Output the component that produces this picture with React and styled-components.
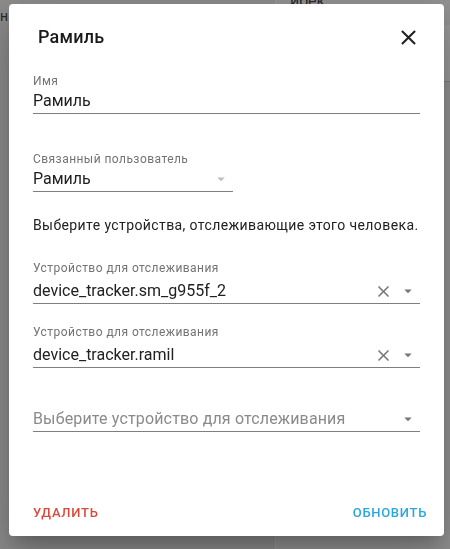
import styled, { createGlobalStyle } from "styled-components";

const GlobalStyle = createGlobalStyle`
  html, body {
    margin: 0;
    padding: 0;
    height: 100%;
    overflow: hidden;
    font-family: Roboto, "Noto Sans", sans-serif;
  }
`;

const CloseIcon = ({ size = 24, color = "currentColor" }) => (
  <svg width={size} height={size} viewBox="0 0 24 24">
    <path
      fill={color}
      d="M19,6.41L17.59,5L12,10.59L6.41,5L5,6.41L10.59,12L5,17.59L6.41,19L12,13.41L17.59,19L19,17.59L13.41,12L19,6.41Z"
    />
  </svg>
);

const ArrowIcon = ({ color }) => (
  <svg width="18" height="18" viewBox="0 0 24 24">
    <path fill={color} d="M7,10L12,15L17,10H7Z" />
  </svg>
);

function Field({ label, value, placeholder, width, clearable, arrow, gap }) {
  return (
    <FieldBox $width={width}>
      <Label $gap={gap}>{label || "\u00a0"}</Label>
      <InputRow>
        {value ? <Value>{value}</Value> : <Placeholder>{placeholder}</Placeholder>}
        {clearable && (
          <ClearBtn>
            <CloseIcon size={19} color="#777" />
          </ClearBtn>
        )}
        {arrow && (
          <ArrowBox>
            <ArrowIcon color={arrow} />
          </ArrowBox>
        )}
      </InputRow>
    </FieldBox>
  );
}

export default function App() {
  return (
    <>
      <GlobalStyle />
      <Page>
        <LeftCol>
          <PageText>он</PageText>
        </LeftCol>
        <RightCol>
          <CardTitle>ибек</CardTitle>
          <SideBlock />
        </RightCol>
      </Page>
      <Dialog>
        <Header>
          <Title>Рамиль</Title>
          <CloseBtn>
            <CloseIcon size={25} color="#212121" />
          </CloseBtn>
        </Header>
        <Content>
          <Field label="Имя" value="Рамиль" />
          <Spacer $h={37} />
          <Field label="Связанный пользователь" value="Рамиль" width="200px" arrow="#bdbdbd" />
          <Spacer $h={23} />
          <Helper>Выберите устройства, отслеживающие этого человека.</Helper>
          <Spacer $h={25} />
          <Field
            label="Устройство для отслеживания"
            value="device_tracker.sm_g955f_2"
            clearable
            arrow="#757575"
            gap={3}
          />
          <Spacer $h={20} />
          <Field
            label="Устройство для отслеживания"
            value="device_tracker.ramil"
            clearable
            arrow="#757575"
            gap={3}
          />
          <Spacer $h={20} />
          <Field placeholder="Выберите устройство для отслеживания" arrow="#757575" gap={3} />
        </Content>
        <Footer>
          <TextButton $color="#d8493c">Удалить</TextButton>
          <TextButton $color="#2aa6de">Обновить</TextButton>
        </Footer>
      </Dialog>
    </>
  );
}

const Page = styled.div`
  height: 100vh;
  display: grid;
  grid-template-columns: 275px 1fr;
  background: #8d8d8d;
`;

const LeftCol = styled.div`
  padding-top: 8px;
  overflow: hidden;
`;

const PageText = styled.div`
  margin-left: -8px;
  font-size: 14px;
  color: #2a2a2a;
`;

const RightCol = styled.div`
  border-left: 1px solid #9c9c9c;
  background: #939393;
  display: flex;
  flex-direction: column;
  align-items: stretch;
  overflow: hidden;
`;

const CardTitle = styled.div`
  margin-top: -9px;
  padding-left: 14px;
  font-size: 16px;
  color: #2a2a2a;
  height: 34px;
`;

const SideBlock = styled.div`
  height: 56px;
  background: #9b9b9b;
  border-bottom: 1px solid #7f7f7f;
`;

const Dialog = styled.div`
  position: fixed;
  left: 9px;
  top: 4px;
  width: 435px;
  height: 532px;
  background: #fff;
  border-radius: 4px;
  display: flex;
  flex-direction: column;
  box-shadow: 0 11px 15px -7px rgba(0, 0, 0, 0.2),
    0 24px 38px 3px rgba(0, 0, 0, 0.14), 0 9px 46px 8px rgba(0, 0, 0, 0.12);
`;

const Header = styled.div`
  display: flex;
  align-items: center;
  justify-content: space-between;
  padding: 21px 23px 0 29px;
  height: 24px;
`;

const Title = styled.h2`
  margin: 0;
  font-size: 18px;
  line-height: 24px;
  font-weight: 500;
  color: #1a1a1a;
  letter-spacing: 0.2px;
`;

const CloseBtn = styled.div`
  display: flex;
  width: 25px;
  height: 25px;
`;

const Content = styled.div`
  display: flex;
  flex-direction: column;
  padding: 24px 24px 0 24px;
`;

const Spacer = styled.div`
  height: ${(p) => p.$h}px;
  flex-shrink: 0;
`;

const FieldBox = styled.div`
  width: ${(p) => p.$width || "100%"};
  border-bottom: 1px solid rgba(0, 0, 0, 0.5);
`;

const Label = styled.div`
  font-size: 12px;
  line-height: 16px;
  color: #737373;
  letter-spacing: 0.45px;
  margin-bottom: ${(p) => p.$gap || 0}px;
`;

const InputRow = styled.div`
  display: flex;
  align-items: center;
  height: 24px;
`;

const Value = styled.div`
  flex: 1;
  font-size: 16px;
  line-height: 24px;
  color: #212121;
  letter-spacing: 0;
`;

const Placeholder = styled(Value)`
  color: #8a8a8a;
  letter-spacing: 0.15px;
`;

const ClearBtn = styled.div`
  display: flex;
  margin-right: 6px;
`;

const ArrowBox = styled.div`
  display: flex;
  margin-right: 3px;
`;

const Helper = styled.p`
  margin: 0;
  font-size: 14px;
  line-height: 20px;
  color: #212121;
  letter-spacing: 0.4px;
`;

const Footer = styled.div`
  margin-top: auto;
  display: flex;
  justify-content: space-between;
  padding: 0 9px 6px 16px;
`;

const TextButton = styled.button`
  border: none;
  background: none;
  height: 36px;
  padding: 0 8px;
  font-family: Roboto, "Noto Sans", sans-serif;
  font-size: 13px;
  font-weight: 500;
  letter-spacing: 0.7px;
  text-transform: uppercase;
  color: ${(p) => p.$color};
`;
